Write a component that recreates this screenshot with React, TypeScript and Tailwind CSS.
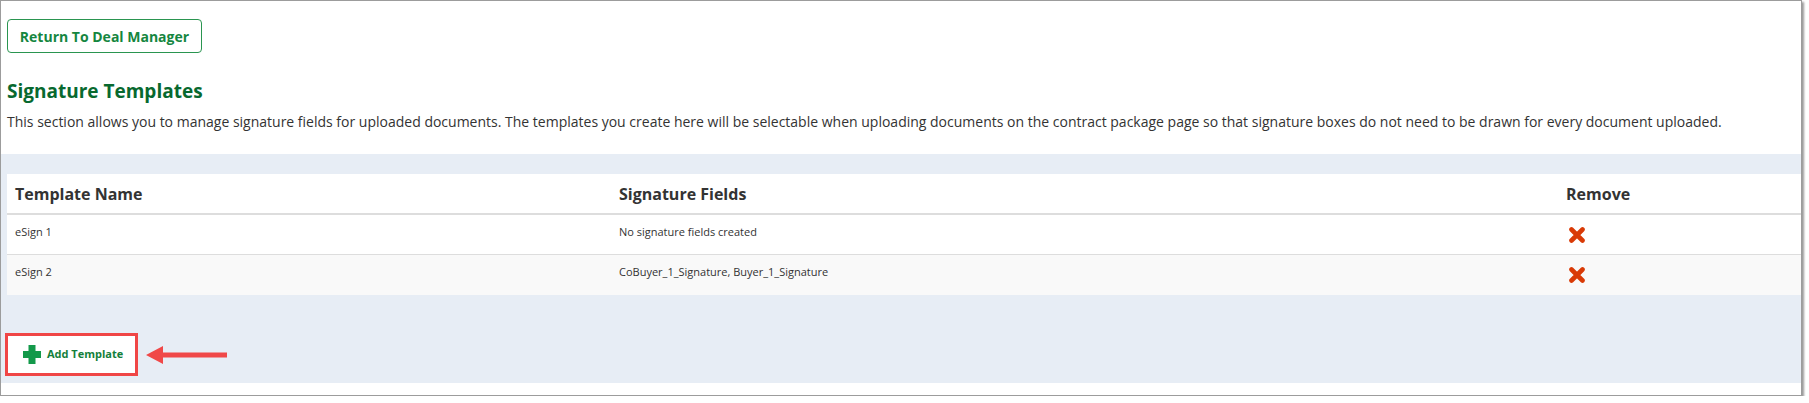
import React from "react";

const rows = [
  { name: "eSign 1", fields: "No signature fields created", striped: false },
  { name: "eSign 2", fields: "CoBuyer_1_Signature, Buyer_1_Signature", striped: true },
];

function RemoveIcon() {
  return (
    <svg width="18" height="16" viewBox="0 0 18 16" className="ml-[2px]">
      <path
        d="M3.5 2.5 L14.5 13.5 M14.5 2.5 L3.5 13.5"
        stroke="#d93a06"
        strokeWidth="4.6"
        strokeLinecap="round"
        fill="none"
      />
    </svg>
  );
}

function PlusIcon() {
  return (
    <svg width="18" height="19" viewBox="0 0 18 19">
      <path d="M5.5 0 H12.5 V6 H18 V13 H12.5 V19 H5.5 V13 H0 V6 H5.5 Z" fill="#13994a" />
    </svg>
  );
}

function Arrow() {
  return (
    <svg width="81" height="18" viewBox="0 0 81 18">
      <path d="M0 9 L17 0 L17 6.5 L81 6.5 L81 11.5 L17 11.5 L17 18 Z" fill="#f04848" />
    </svg>
  );
}

export default function App() {
  return (
    <div className="w-[1802px] h-[396px] bg-white border border-[#9c9c9c] shadow-[2px_2px_2px_rgba(0,0,0,0.4)] font-['Open_Sans',sans-serif] flex flex-col">
      {/* top section */}
      <div className="pl-[6px] pt-[18px]">
        <button className="w-[195px] h-[34px] border border-[#2a9550] rounded-[4px] bg-white text-[#15863f] text-[14px] font-bold flex items-center justify-center">
          Return To Deal Manager
        </button>
        <h2 className="mt-[25px] text-[19px] leading-[26px] font-bold text-[#08692f]">
          Signature Templates
        </h2>
        <p className="mt-[8px] text-[14px] leading-[20px] text-[#333333]">
          This section allows you to manage signature fields for uploaded documents. The templates you create here will be selectable when uploading documents on the contract package page so that signature boxes do not need to be drawn for every document uploaded.
        </p>
      </div>

      {/* templates panel */}
      <div className="mt-[22px] bg-[#e7edf5] pl-[6px] pt-[20px] pb-[7px]">
        <div className="bg-white">
          <div className="grid grid-cols-[604px_947px_1fr] h-[41px] border-b-2 border-[#dddddd] items-center text-[16px] font-bold text-[#333333]">
            <div className="pl-[8px]">Template Name</div>
            <div className="pl-[8px]">Signature Fields</div>
            <div className="pl-[8px]">Remove</div>
          </div>
          {rows.map((row, i) => (
            <div
              key={row.name}
              className={
                "grid grid-cols-[604px_947px_1fr] h-[40px] text-[11px] leading-[15px] text-[#333333] " +
                (row.striped ? "bg-[#f9f9f9]" : "bg-white") +
                (i < rows.length - 1 ? " border-b border-[#dddddd]" : "")
              }
            >
              <div className="pl-[8px] pt-[9px]">{row.name}</div>
              <div className="pl-[8px] pt-[9px]">{row.fields}</div>
              <div className="pl-[8px] flex items-center">
                <RemoveIcon />
              </div>
            </div>
          ))}
        </div>

        <div className="mt-[38px] -ml-[2px] flex items-center">
          <div className="border-[3px] border-[#f04646] bg-white w-[133px] h-[43px] flex items-center">
            <div className="flex items-center pl-[15px] gap-[6px]">
              <PlusIcon />
              <span className="text-[11px] font-bold text-[#13803b]">Add Template</span>
            </div>
          </div>
          <div className="ml-[8px]">
            <Arrow />
          </div>
        </div>
      </div>
    </div>
  );
}
